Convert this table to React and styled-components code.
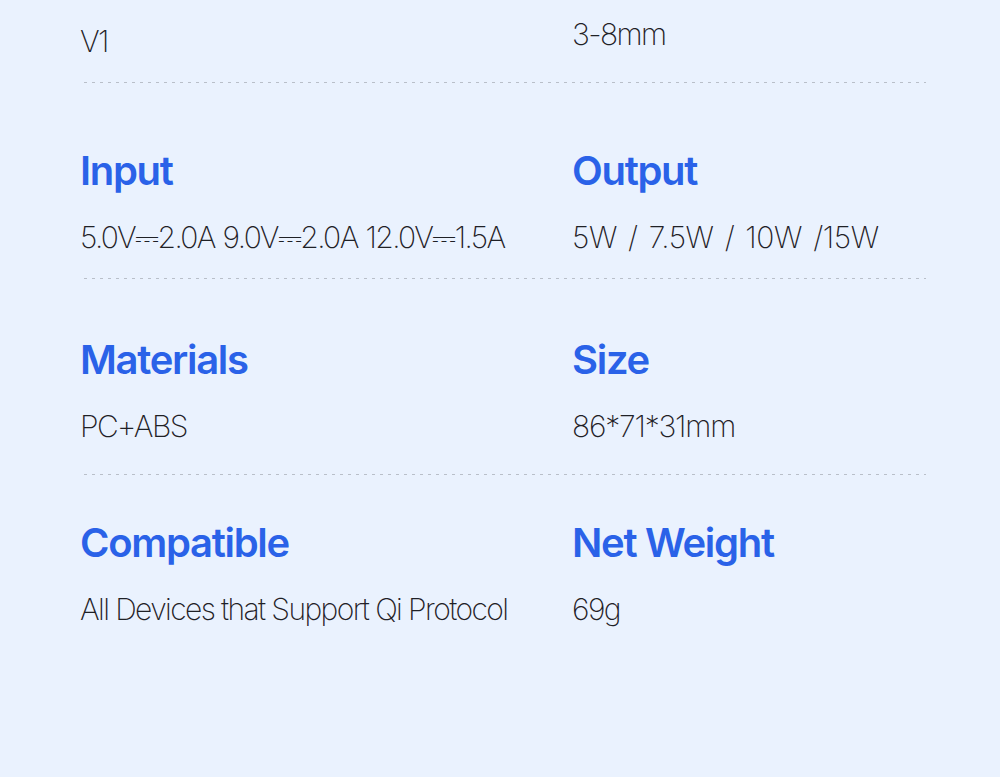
import styled, { createGlobalStyle } from 'styled-components';

const GlobalStyle = createGlobalStyle`
  html, body {
    margin: 0;
    padding: 0;
    background: #eaf2fe;
  }
  body {
    font-family: Inter, "Noto Sans", sans-serif;
  }
`;

const Page = styled.div`
  width: 1000px;
  height: 777px;
  background: #eaf2fe;
  overflow: hidden;
`;

const Row = styled.div`
  display: grid;
  grid-template-columns: 492px 1fr;
  padding: ${(p) => p.$pt}px 0 ${(p) => p.$pb}px 80px;
`;

const Cell = styled.div`
  display: flex;
  flex-direction: column;
  gap: 24px;
`;

const Title = styled.h2`
  margin: 0;
  font-family: Inter, sans-serif;
  font-size: 40px;
  line-height: 48px;
  font-weight: 600;
  letter-spacing: -1.3px;
  color: #2a62e8;
`;

const Value = styled.p`
  margin: ${(p) => p.$shift || 0}px 0 0 0;
  font-family: Inter, sans-serif;
  font-size: 30px;
  line-height: 36px;
  font-weight: 200;
  letter-spacing: ${(p) => (p.$ls ?? -1.6)}px;
  word-spacing: ${(p) => p.$ws || 0}px;
  color: #1f2126;
  white-space: pre;
`;

const Divider = styled.div`
  height: 1px;
  margin: 0 74px 0 84px;
  background-image: repeating-linear-gradient(
    to right,
    #b9bfc9 0 3px,
    transparent 3px 8px
  );
`;

const rows = [
  {
    pt: 64,
    pb: 23,
    items: [
      { title: 'Input', value: '5.0V⎓2.0A  9.0V⎓2.0A  12.0V⎓1.5A', ws: -3 },
      { title: 'Output', value: '5W / 7.5W / 10W /15W', ws: 3, ls: -0.4 },
    ],
  },
  {
    pt: 57,
    pb: 30,
    items: [
      { title: 'Materials', value: 'PC+ABS' },
      { title: 'Size', value: '86*71*31mm', ls: -1.2 },
    ],
  },
  {
    pt: 44,
    pb: 0,
    items: [
      { title: 'Compatible', value: 'All Devices that Support Qi Protocol' },
      { title: 'Net Weight', value: '69g' },
    ],
  },
];

const App = () => {
  return (
    <Page>
      <GlobalStyle />
      <Row $pt={23} $pb={23}>
        <Cell>
          <Value>V1</Value>
        </Cell>
        <Cell>
          <Value $shift={-7}>3-8mm</Value>
        </Cell>
      </Row>
      {rows.map((row) => (
        <div key={row.items[0].title}>
          <Divider />
          <Row $pt={row.pt} $pb={row.pb}>
            {row.items.map((item) => (
              <Cell key={item.title}>
                <Title>{item.title}</Title>
                <Value $ws={item.ws} $ls={item.ls}>
                  {item.value}
                </Value>
              </Cell>
            ))}
          </Row>
        </div>
      ))}
    </Page>
  );
};

export default App;
